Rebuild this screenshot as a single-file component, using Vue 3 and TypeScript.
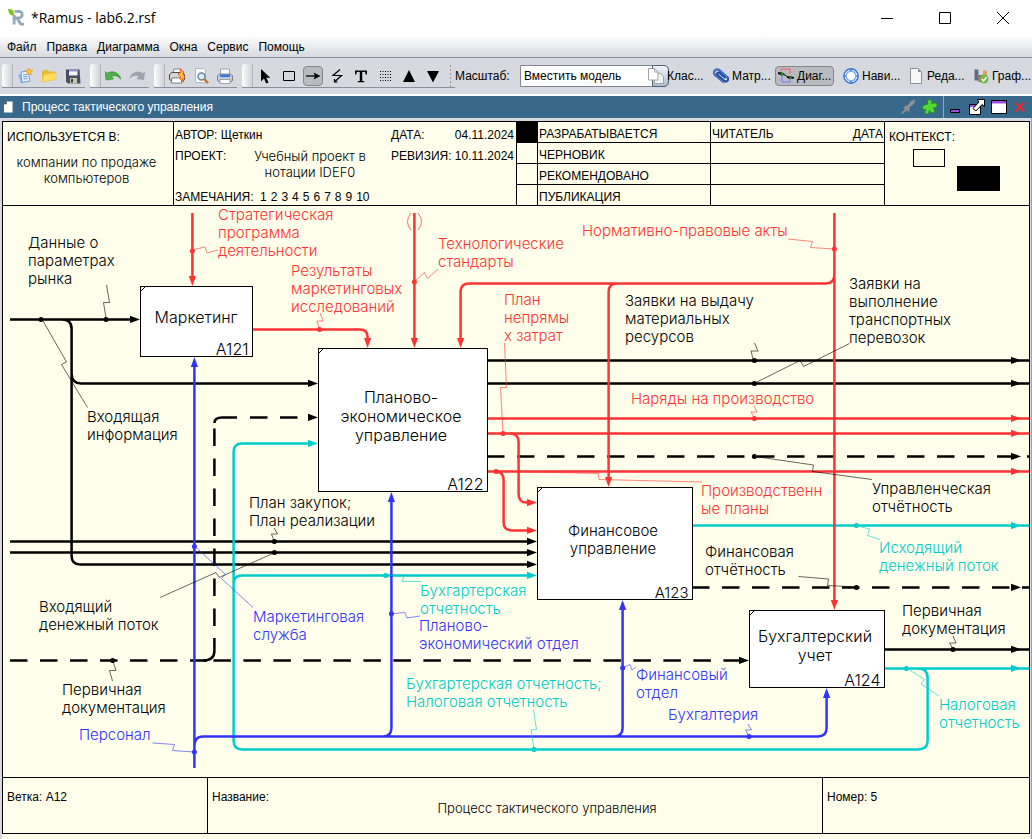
<script setup lang="ts">
import { ref } from 'vue'

type Tone = 'black' | 'red' | 'blue' | 'teal'
type Dir = 'right' | 'up' | 'down'
type Flow = { tone: Tone; d: string; dashed?: boolean }
type Head = { tone: Tone; x: number; y: number; dir: Dir }
type Dot = { tone: Tone; x: number; y: number }
type Leader = { tone: Tone; points: string }
type Label = { tone: Tone; x: number; y: number; lines: string[] }
type Box = { id: string; x: number; y: number; w: number; h: number; size: string; cx: number; ty: number; step: number; lines: string[] }

const zoomLevel = ref('fit')
const menus = ['Файл', 'Правка', 'Диаграмма', 'Окна', 'Сервис', 'Помощь']
const statuses = ['РАЗРАБАТЫВАЕТСЯ', 'ЧЕРНОВИК', 'РЕКОМЕНДОВАНО', 'ПУБЛИКАЦИЯ']

const flows: Flow[] = [
  { tone: 'black', d: 'M10 319.4H133M62 319.4Q71.6 319.4 71.6 329V556Q71.6 564.4 80 564.4H530M71.6 374Q72 383.4 81 383.4H311' },
  { tone: 'black', d: 'M10 541.4H530M10 552.6H530' },
  { tone: 'black', dashed: true, d: 'M10 660.4H207' },
  { tone: 'black', d: 'M203 660.4Q214.4 660.4 214.4 651V638M214.4 423Q214.4 417.4 222 417.4H237' },
  { tone: 'black', dashed: true, d: 'M214.4 626V428' },
  { tone: 'black', dashed: true, d: 'M250 417.4H311' },
  { tone: 'black', dashed: true, d: 'M213.4 660.4H742' },
  { tone: 'teal', d: 'M692 525.6H1029M884 668.4H1029M918 668.4Q927.6 668.4 927.6 678V741Q927.6 749.4 918 749.4H242Q233.6 749.4 233.6 741V452Q233.6 443.4 242 443.4H311M233.6 584Q233.6 575.4 242 575.4H530' },
  { tone: 'black', d: 'M487 360.4H1029M487 383.4H1029M884 649.4H1029' },
  { tone: 'red', d: 'M487 418.4H1029M487 433.4H1029M487 471.4H1029' },
  { tone: 'black', dashed: true, d: 'M487 456.4H1029' },
  { tone: 'black', dashed: true, d: 'M692 587.4H1029' },
  { tone: 'red', d: 'M192.4 213V280M252 329.4H360Q367.6 329.4 367.6 337V342M414.4 213V342' },
  { tone: 'red', d: 'M834.4 213V603M834.4 274Q834.4 283.4 826 283.4H469Q460.6 283.4 460.6 292V342M617 283.4Q608.6 283.4 608.6 292V480' },
  { tone: 'red', d: 'M510 433.4Q518.6 433.4 518.6 442V494Q518.6 502.6 527 502.6H530M495 471.4Q503.6 471.4 503.6 480V522Q503.6 530.4 512 530.4H530' },
  { tone: 'blue', d: 'M194.4 768V363M194.4 746Q194.4 736.4 203 736.4H818Q826.6 736.4 826.6 728V694M383 736.4Q391.4 736.4 391.4 728V498M614 736.4Q622.6 736.4 622.6 728V606' },
]

const heads: Head[] = [
  { tone: 'black', x: 140, y: 319.4, dir: 'right' },
  { tone: 'black', x: 318, y: 383.4, dir: 'right' },
  { tone: 'black', x: 318, y: 417.4, dir: 'right' },
  { tone: 'teal', x: 318, y: 443.4, dir: 'right' },
  { tone: 'red', x: 537, y: 502.6, dir: 'right' },
  { tone: 'red', x: 537, y: 530.4, dir: 'right' },
  { tone: 'black', x: 537, y: 541.4, dir: 'right' },
  { tone: 'black', x: 537, y: 552.6, dir: 'right' },
  { tone: 'black', x: 537, y: 564.4, dir: 'right' },
  { tone: 'teal', x: 537, y: 575.4, dir: 'right' },
  { tone: 'black', x: 749, y: 660.4, dir: 'right' },
  { tone: 'black', x: 1021, y: 360.4, dir: 'right' },
  { tone: 'black', x: 1021, y: 383.4, dir: 'right' },
  { tone: 'red', x: 1021, y: 418.4, dir: 'right' },
  { tone: 'red', x: 1021, y: 433.4, dir: 'right' },
  { tone: 'black', x: 1021, y: 456.4, dir: 'right' },
  { tone: 'red', x: 1021, y: 471.4, dir: 'right' },
  { tone: 'teal', x: 1021, y: 525.6, dir: 'right' },
  { tone: 'black', x: 1021, y: 587.4, dir: 'right' },
  { tone: 'black', x: 1021, y: 649.4, dir: 'right' },
  { tone: 'teal', x: 1021, y: 668.4, dir: 'right' },
  { tone: 'red', x: 192.4, y: 286, dir: 'down' },
  { tone: 'red', x: 367.6, y: 348, dir: 'down' },
  { tone: 'red', x: 414.4, y: 348, dir: 'down' },
  { tone: 'red', x: 460.6, y: 348, dir: 'down' },
  { tone: 'red', x: 608.6, y: 487, dir: 'down' },
  { tone: 'red', x: 834.4, y: 610, dir: 'down' },
  { tone: 'blue', x: 194.4, y: 357, dir: 'up' },
  { tone: 'blue', x: 391.4, y: 492, dir: 'up' },
  { tone: 'blue', x: 622.6, y: 600, dir: 'up' },
  { tone: 'blue', x: 826.6, y: 688, dir: 'up' },
]
const angles: Record<Dir, number> = { right: 0, down: 90, up: -90 }

const dots: Dot[] = [
  { tone: 'red', x: 192.4, y: 251 }, { tone: 'black', x: 41, y: 319.4 }, { tone: 'black', x: 106, y: 319.4 },
  { tone: 'red', x: 319.6, y: 329.4 }, { tone: 'red', x: 414.4, y: 282 }, { tone: 'red', x: 834.4, y: 249 },
  { tone: 'black', x: 754.4, y: 360.4 }, { tone: 'black', x: 754.4, y: 383.4 }, { tone: 'red', x: 754.4, y: 418.4 },
  { tone: 'red', x: 503, y: 433.4 }, { tone: 'black', x: 754.4, y: 456.4 }, { tone: 'red', x: 496, y: 471.4 },
  { tone: 'black', x: 274.4, y: 541.4 }, { tone: 'black', x: 274.4, y: 552.6 }, { tone: 'blue', x: 194.4, y: 546.4 },
  { tone: 'black', x: 112.6, y: 660.6 }, { tone: 'blue', x: 194.4, y: 752 }, { tone: 'teal', x: 385.6, y: 575.4 },
  { tone: 'blue', x: 391.4, y: 613.8 }, { tone: 'blue', x: 622.6, y: 668 }, { tone: 'teal', x: 534, y: 749.4 },
  { tone: 'teal', x: 856.4, y: 525.6 }, { tone: 'black', x: 856.4, y: 587.4 }, { tone: 'black', x: 953, y: 649.4 },
  { tone: 'teal', x: 906.4, y: 668.4 }, { tone: 'blue', x: 749, y: 736.4 },
]

const leaders: Leader[] = [
  { tone: 'red', points: '192,250 205,247 207,253 218,250' },
  { tone: 'black', points: '106,318 103.5,302.5 109.5,302.5 106.5,285' },
  { tone: 'black', points: '42.5,320 66.5,362 61.5,364.5 87.5,407.5' },
  { tone: 'red', points: '319.5,329 317,321 323,321 320,313' },
  { tone: 'red', points: '414,282 424.5,272.5 427.5,278.5 438,269' },
  { tone: 'red', points: '503,433 500.5,387.5 506.5,387.5 504.5,343' },
  { tone: 'red', points: '788,239 812.5,241.5 810.5,247.5 834,249' },
  { tone: 'black', points: '753,359 751,351 758,351 754.5,343' },
  { tone: 'black', points: '755,383 800,360.5 803.5,366.5 849.5,343.5' },
  { tone: 'red', points: '754,417 751,412 757,412 754,406' },
  { tone: 'black', points: '755,456.5 813.5,465 812.5,471.5 872,479.5' },
  { tone: 'red', points: '496,471 598.5,473.5 599,479.5 702,482' },
  { tone: 'black', points: '274,541 271.5,534 277.5,534 274,528' },
  { tone: 'black', points: '274,553 219,577.5 216,572.5 160,597.5' },
  { tone: 'blue', points: '194.5,546 225.5,574.5 221.5,578.5 253,607.5' },
  { tone: 'black', points: '112.5,660 116,670.5 109.5,670.5 112.5,681' },
  { tone: 'blue', points: '152.5,743 174.5,744.5 172.5,750.5 194,752' },
  { tone: 'teal', points: '386,575 404,576 402,581.5 421,581.5' },
  { tone: 'blue', points: '391,614 405,612.5 407,618 420,616' },
  { tone: 'blue', points: '622.5,668 630,664.5 632,670 636,667' },
  { tone: 'teal', points: '534,749 531,730 536.5,729.5 533.5,710' },
  { tone: 'teal', points: '856.5,525.5 869.5,529 867.5,535.5 880,539.5' },
  { tone: 'black', points: '798.5,576.5 828.5,579 827.5,585.5 856,587' },
  { tone: 'black', points: '953,649 949.5,643 956,643 953,636' },
  { tone: 'teal', points: '906.5,668 924.5,679.5 921,684 939,696' },
  { tone: 'blue', points: '749,736 745.5,730 751.5,730 748,724' },
]

const labels: Label[] = [
  { tone: 'black', x: 28, y: 248, lines: ['Данные о', 'параметрах', 'рынка'] },
  { tone: 'red', x: 218, y: 220, lines: ['Стратегическая', 'программа', 'деятельности'] },
  { tone: 'red', x: 291, y: 276, lines: ['Результаты', 'маркетинговых', 'исследований'] },
  { tone: 'red', x: 438, y: 249, lines: ['Технологические', 'стандарты'] },
  { tone: 'red', x: 582, y: 236, lines: ['Нормативно-правовые акты'] },
  { tone: 'red', x: 504, y: 305, lines: ['План', 'непрямы', 'х затрат'] },
  { tone: 'black', x: 625, y: 306, lines: ['Заявки на выдачу', 'материальных', 'ресурсов'] },
  { tone: 'black', x: 849, y: 289, lines: ['Заявки на', 'выполнение', 'транспортных', 'перевозок'] },
  { tone: 'red', x: 631, y: 404, lines: ['Наряды на производство'] },
  { tone: 'black', x: 87, y: 422, lines: ['Входящая', 'информация'] },
  { tone: 'black', x: 249, y: 508, lines: ['План закупок;', 'План реализации'] },
  { tone: 'black', x: 39, y: 612, lines: ['Входящий', 'денежный поток'] },
  { tone: 'black', x: 62, y: 695, lines: ['Первичная', 'документация'] },
  { tone: 'blue', x: 79, y: 740, lines: ['Персонал'] },
  { tone: 'blue', x: 253, y: 622, lines: ['Маркетинговая', 'служба'] },
  { tone: 'teal', x: 420, y: 596, lines: ['Бухгартерская', 'отчетность'] },
  { tone: 'blue', x: 419, y: 631, lines: ['Планово-', 'экономический отдел'] },
  { tone: 'teal', x: 406, y: 689, lines: ['Бухгартерская отчетность;', 'Налоговая отчетность'] },
  { tone: 'blue', x: 636, y: 680, lines: ['Финансовый', 'отдел'] },
  { tone: 'blue', x: 668, y: 720, lines: ['Бухгалтерия'] },
  { tone: 'red', x: 701, y: 496, lines: ['Производственн', 'ые планы'] },
  { tone: 'black', x: 872, y: 494, lines: ['Управленческая', 'отчётность'] },
  { tone: 'teal', x: 879, y: 553, lines: ['Исходящий', 'денежный поток'] },
  { tone: 'black', x: 705, y: 557, lines: ['Финансовая', 'отчётность'] },
  { tone: 'black', x: 902, y: 616, lines: ['Первичная', 'документация'] },
  { tone: 'teal', x: 939, y: 710, lines: ['Налоговая', 'отчетность'] },
]

const boxes: Box[] = [
  { id: 'A121', x: 140.5, y: 286.5, w: 112, h: 70, size: 'big', cx: 196, ty: 323, step: 19, lines: ['Маркетинг'] },
  { id: 'A122', x: 318.5, y: 348.5, w: 169, h: 143, size: 'big', cx: 401, ty: 403, step: 19, lines: ['Планово-', 'экономическое', 'управление'] },
  { id: 'A123', x: 537.5, y: 487.5, w: 155, h: 112, size: 'mid', cx: 613, ty: 536, step: 18, lines: ['Финансовое', 'управление'] },
  { id: 'A124', x: 749.5, y: 610.5, w: 135, h: 77, size: 'big', cx: 815, ty: 642, step: 19, lines: ['Бухгалтерский', 'учет'] },
]
</script>

<template>
  <div class="window">
    <header class="titlebar">
      <svg class="logo" viewBox="0 0 18 18" aria-hidden="true">
        <path d="M7 2.5h4.5a3.5 3.5 0 0 1 0 7H6.500M6.500 6v10.500M9.500 9.500l4 6.500H17" fill="none" stroke="#92a9ba" stroke-width="3" />
        <path d="M0 0c5 0 7 2 6 7-4 0-5-2-6-7z" fill="#7fc41c" />
      </svg>
      <h1>*Ramus - lab6.2.rsf</h1>
      <div class="window-controls">
        <button aria-label="Свернуть окно"><svg viewBox="0 0 14 14"><path d="M1 7.500h12" /></svg></button>
        <button aria-label="Развернуть окно"><svg viewBox="0 0 14 14"><path d="M1.500 1.500h11v11h-11z" /></svg></button>
        <button aria-label="Закрыть окно"><svg viewBox="0 0 14 14"><path d="M1 1l12 12M13 1L1 13" /></svg></button>
      </div>
    </header>

    <nav class="menubar" aria-label="Меню">
      <button v-for="m in menus" :key="m">{{ m }}</button>
    </nav>

    <div class="toolbar">
      <div class="group">
        <i class="grip"></i>
        <button aria-label="Новый">
          <svg viewBox="0 0 16 16"><path d="M1 7l8-3 3 9-8 2.500z" fill="#8db8ee" /><path d="M4 4l7-1 2 10-8 1.500z" fill="#e6f0fd" stroke="#6f9edb" /><path d="M6 7l4-.6M6.400 9l4-.6M6.800 11l4-.6" stroke="#6f9edb" /><path d="M12 0l1.200 2.200 2.600.3-1.900 1.800.5 2.500L12 5.600 9.700 6.800l.5-2.500L8.300 2.500l2.500-.3z" fill="#ffc42e" stroke="#ee8a1c" stroke-width=".6" /></svg>
        </button>
        <button aria-label="Открыть">
          <svg viewBox="0 0 16 16"><path d="M1 13.500V3l5-1.500L8 3.500h6v8z" fill="#e9b93a" /><path d="M1 14l2-7.500L15 4.500v7z" fill="#ffdc62" stroke="#efc13c" stroke-width=".6" /></svg>
        </button>
        <button aria-label="Сохранить">
          <svg viewBox="0 0 16 16"><path d="M1 1.500h13.500l1 14H3l-2-2z" fill="#4b4b63" /><path d="M4 2h8.500v5.500H4z" fill="#f3f3fb" /><path d="M4 2h8.500v1.500H4z" fill="#9c8fd8" /><path d="M5 10h7v5.500H5z" fill="#c9c9a8" /><path d="M6 11h2v3.500H6z" fill="#38384c" /></svg>
        </button>
      </div>

      <div class="group">
        <i class="grip"></i>
        <button aria-label="Отменить">
          <svg viewBox="0 0 16 16"><path d="M0 3.500l2.300 1.700C7 2.500 14 3.500 16 11.500c-2.500-3.500-6.500-4.500-9.500-3L8.500 11 1 12z" fill="#4fb04a" stroke="#2c8a35" stroke-width=".6" /></svg>
        </button>
        <button aria-label="Повторить">
          <svg viewBox="0 0 16 16"><path d="M16 3.500l-2.300 1.700C9 2.500 2 3.500 0 11.500c2.500-3.500 6.500-4.500 9.500-3L7.500 11l7.500 1z" fill="#a0a2a6" /></svg>
        </button>
      </div>

      <div class="group">
        <i class="grip"></i>
        <button aria-label="Быстрая печать">
          <svg viewBox="0 0 16 16"><path d="M4 5l1-4h7l1 4z" fill="#fff" stroke="#8b8b8b" /><path d="M.5 6.500L3 4.500h10l2.500 2v5L13 13H3L.5 11.500z" fill="#d5d5d5" stroke="#4a4a4a" /><path d="M3 10h9l1 5H2z" fill="#fff" stroke="#555" stroke-width=".7" /><path d="M11 1l4 3-1.500 2 2.500 3-2.500 1.500L15 14l-4.500-3.500L12 9 9 6l2.500-1.500z" fill="#ffd23d" stroke="#ee4a1c" stroke-width=".9" /></svg>
        </button>
        <button aria-label="Предварительный просмотр">
          <svg viewBox="0 0 16 16"><path d="M2.500.5h8l2 2v12h-10z" fill="#fff" stroke="#a9bccb" /><circle cx="8.500" cy="8.500" r="3.500" fill="#d7ecf8" stroke="#6c8494" stroke-width="1.400" /><path d="M11 11l4 4" stroke="#c2722d" stroke-width="2.400" /></svg>
        </button>
        <button aria-label="Печать">
          <svg viewBox="0 0 16 16"><path d="M3.500 7V1h9v6z" fill="#fff" stroke="#9aa4b0" /><path d="M.5 7.500L2.500 6h11l2 1.500v5l-2 1.500h-11l-2-1.500z" fill="#c5cad2" stroke="#646c78" stroke-width=".8" /><path d="M3 6.500h10v2.500H3z" fill="#3778d8" /><path d="M3 11.500h10v4H3z" fill="#fff" stroke="#7d8794" stroke-width=".7" /></svg>
        </button>
      </div>

      <div class="group">
        <i class="grip"></i>
        <button aria-label="Курсор"><svg viewBox="0 0 16 16"><path d="M4 1v12.500l3-3 2.200 5 2.300-1-2.200-4.800h4z" fill="#000" /></svg></button>
        <button aria-label="Функциональный блок"><svg viewBox="0 0 16 16"><path d="M2.500 3.500h11v9h-11z" fill="none" stroke="#000" /></svg></button>
        <button class="pressed" aria-label="Стрелка"><svg viewBox="0 0 16 16"><path d="M1 8h10" stroke="#000" stroke-width="1.300" /><path d="M8.500 4.500L15.500 8l-7 3.500 1.500-3.500z" fill="#000" /></svg></button>
        <button aria-label="Тильда"><svg viewBox="0 0 16 16"><path d="M11 1.500L4 7.500h8.500L6 13.500M5.500 11v3h3" fill="none" stroke="#000" stroke-width="1.200" /></svg></button>
        <button aria-label="Текст"><svg viewBox="0 0 16 16"><path d="M2 2.500h12v4h-1.200L12 4H9.200v9h2v1.200H4.800V13h2V4H4l-.8 2.500H2z" fill="#000" /></svg></button>
        <button aria-label="Сетка"><svg viewBox="0 0 16 16"><path d="M3 3.500h11M3 6.500h11M3 9.500h11M3 12.500h11" stroke="#000" stroke-width="1" stroke-dasharray="1 1.500" /></svg></button>
        <button aria-label="Вверх"><svg viewBox="0 0 16 16"><path d="M8 2l6 12H2z" fill="#000" /></svg></button>
        <button aria-label="Вниз"><svg viewBox="0 0 16 16"><path d="M8 14.500L2 3h12z" fill="#000" /></svg></button>
        <i class="sep"></i>
      </div>

      <label class="scale-label" for="scale">Масштаб:</label>
      <div class="combo">
        <select id="scale" v-model="zoomLevel"><option value="fit">Вместить модель</option></select>
        <i class="combo-arrow"></i>
      </div>

      <div class="views">
        <button>
          <svg viewBox="0 0 16 16"><path d="M6.500 5.500h6l3 3v7h-9z" fill="#f4f4f4" stroke="#a2a2a2" /><path d="M.5.500h6l3.500 3.500v8H.5z" fill="#fff" stroke="#a2a2a2" /><path d="M6.500.500V4H10" fill="none" stroke="#a2a2a2" /></svg><span>Клас...</span>
        </button>
        <button>
          <svg viewBox="0 0 16 16"><path d="M11 14.500L2 7C-.5 4 2.500 0 6 2l8.500 7.500c2 2.500-1 5-3 3.500L4.500 7c-1-1.500.5-3 2-2l6 5" fill="none" stroke="#2450a8" stroke-width="2.200" /><path d="M11 14.500L2 7C-.5 4 2.500 0 6 2l8.500 7.500" fill="none" stroke="#7fa8ea" stroke-width=".7" /></svg><span>Матр...</span>
        </button>
        <button class="pressed">
          <svg viewBox="0 0 16 16"><path d="M3 3V1h9v5" fill="none" stroke="#f55" /><path d="M4 7v7h8v-3" fill="none" stroke="#77f" /><path d="M0 4l4 .5L7 6 4 7.500 0 6zM9 8.500l3-.5 4 1v1.500l-4 .5-3-1z" fill="#111" /><circle cx="4" cy="6" r="1.500" fill="#1e8a28" /><circle cx="12.500" cy="9.500" r="1.500" fill="#1e8a28" /><path d="M6 6.500l4 2.500" stroke="#111" /></svg><span>Диаг...</span>
        </button>
        <button>
          <svg viewBox="0 0 16 16"><circle cx="8" cy="8" r="7.200" fill="#dbeeff" stroke="#3b74cf" stroke-width="1.400" /><path d="M8 3l3.500 1.500L13 8l-1.500 3.500L8 13l-3.500-1.500L3 8l1.500-3.500z" fill="#fff" stroke="#6fa8f0" stroke-width="1.200" /><path d="M8 1v2M8 13v2M1 8h2M13 8h2" stroke="#2a5cb8" stroke-width="1.200" /></svg><span>Нави...</span>
        </button>
        <button>
          <svg viewBox="0 0 16 16"><path d="M2.500.500h7.500l3.500 3.500v11.500h-11z" fill="#f6f6f6" stroke="#8f8f8f" /><path d="M10 .5V4h3.500z" fill="#888" /></svg><span>Реда...</span>
        </button>
        <button>
          <svg viewBox="0 0 16 16"><path d="M1.500 1.500h4v11h-4z" fill="#5c7187" /><path d="M5.500 7h4v7h-4z" fill="#cb4a3a" /><path d="M10 2.500h4v8h-4z" fill="#dfa05c" /><circle cx="11" cy="11" r="4.500" fill="#6fbb4e" /><path d="M8.800 11l1.700 1.900 3-3.700" fill="none" stroke="#fff" stroke-width="1.500" /></svg><span>Граф...</span>
        </button>
      </div>
    </div>

    <div class="panel-head">
      <svg class="page" viewBox="0 0 10 12" aria-hidden="true"><path d="M3 0h6.500v12H0V3z" fill="#fffdf4" /><path d="M0 3h3V0z" fill="#333" /></svg>
      <h2>Процесс тактического управления</h2>
      <button class="tool" aria-label="Закрепить"><svg viewBox="0 0 16 16"><path d="M1 15l1-2 3-3-2-1.500L8 6l3-4 4.500-1.500L14 5l-4 3-1 5.500L7 11l-3 3z" fill="#8d8f92" /></svg></button>
      <button class="tool" aria-label="Добавить"><svg viewBox="0 0 16 16"><path d="M6 5C4.500 1.500 6 .5 8 .8s2.500 1.700 1.500 4c3-1.500 5-1 5.500.7s-1 3.500-4 3.500c2 2 2 3.500.7 4.500-1.700 1-3.200 0-4.200-2C7 14.500 5.500 15.500 4 15s-1.500-2.500 0-4.500C1.500 11 .5 10 .5 8.500.5 6.500 3 5.500 6 5z" fill="#55d834" stroke="#188d18" stroke-width=".8" /></svg></button>
      <i class="bar"></i>
      <button class="tool" aria-label="Свернуть"><svg viewBox="0 0 16 16"><path d="M3.500 10.500h9v3h-9z" fill="#a44ae8" stroke="#000" /></svg></button>
      <button class="tool" aria-label="Открепить"><svg viewBox="0 0 16 16"><path d="M.5 5.500h11v10H.5z" fill="#fff" stroke="#000" /><path d="M1 6h10v2H1z" fill="#a44ae8" /><path d="M8.500.500h7v7L13 5.500l-6 6.500-3-2.500L10 3z" fill="#fff" stroke="#000" /></svg></button>
      <button class="tool" aria-label="Развернуть"><svg viewBox="0 0 16 16"><path d="M.5 1.500h15v13H.5z" fill="#fff" stroke="#000" /><path d="M1 2h14v2.500H1z" fill="#a44ae8" /></svg></button>
      <button class="tool last" aria-label="Закрыть"><svg viewBox="0 0 16 16"><path d="M4 4l8 8.500M12 3.500l-8 9" stroke="#f0272d" stroke-width="2" /></svg></button>
    </div>

    <main class="canvas">
      <section class="sheet">
        <div class="sheet-head">
          <div class="used">
            <p>ИСПОЛЬЗУЕТСЯ В:</p>
            <p class="spaced">компании по продаже<br>компьютеров</p>
          </div>
          <div class="meta">
            <p><span>АВТОР: Щеткин</span></p>
            <p><span>ДАТА:</span><span>04.11.2024</span></p>
            <p>ПРОЕКТ:</p>
            <p class="spaced project">Учебный проект в<br>нотации IDEF0</p>
            <p><span>РЕВИЗИЯ:</span><span>10.11.2024</span></p>
            <p class="notes"><span class="notes-title">ЗАМЕЧАНИЯ:</span><span v-for="n in 10" :key="n">{{ n }}</span></p>
          </div>
          <table class="status">
            <colgroup><col class="c-mark"><col class="c-name"><col class="c-reader"></colgroup>
            <tbody>
              <tr v-for="(s, i) in statuses" :key="s">
                <td :class="{ on: i === 0 }"></td>
                <th scope="row">{{ s }}</th>
                <td><div v-if="i === 0" class="reader"><span>ЧИТАТЕЛЬ</span><span>ДАТА</span></div></td>
              </tr>
            </tbody>
          </table>
          <div class="context">
            <p>КОНТЕКСТ:</p>
            <svg viewBox="0 0 88 44" aria-hidden="true"><rect x=".5" y=".5" width="31" height="17" fill="none" stroke="#000" /><rect x="44" y="17" width="43" height="25" /></svg>
          </div>
        </div>

        <svg class="diagram" viewBox="3 206 1026 571" role="img" aria-label="Процесс тактического управления">
          <path v-for="(f, i) in flows" :key="'f' + i" :class="['flow', f.tone, { dashed: f.dashed }]" :d="f.d" />
          <path class="paren" d="M411 213Q404 222 411 230M418 213Q425 222 418 230" />
          <polyline v-for="(l, i) in leaders" :key="'l' + i" :class="['leader', l.tone]" :points="l.points" />
          <circle v-for="(p, i) in dots" :key="'p' + i" :class="['solid', p.tone]" :cx="p.x" :cy="p.y" r="2.500" />
          <g v-for="b in boxes" :key="b.id">
            <rect class="box" :x="b.x" :y="b.y" :width="b.w" :height="b.h" />
            <path class="tick" :d="`M${b.x} ${b.y + 5}L${b.x + 5} ${b.y}`" />
            <text :class="b.size" text-anchor="middle"><tspan v-for="(t, i) in b.lines" :key="t" :x="b.cx" :y="b.ty + i * b.step">{{ t }}</tspan></text>
            <text :class="['code', b.size]" text-anchor="end" :x="b.x + b.w - 4" :y="b.y + b.h - 2">{{ b.id }}</text>
          </g>
          <path v-for="(h, i) in heads" :key="'h' + i" :class="['solid', h.tone]" d="M0 0L-10 -3.600V3.600z" :transform="`translate(${h.x} ${h.y}) rotate(${angles[h.dir]})`" />
          <text v-for="(l, i) in labels" :key="'t' + i" :class="['label', l.tone]"><tspan v-for="(t, n) in l.lines" :key="n" :x="l.x" :y="l.y + n * 18">{{ t }}</tspan></text>
        </svg>

        <footer class="sheet-foot">
          <p>Ветка: A12</p>
          <div><p>Название:</p><p class="spaced">Процесс тактического управления</p></div>
          <p>Номер: 5</p>
        </footer>
      </section>
    </main>
  </div>
</template>

<style>
body { margin: 0; background: #ffffeb; }
</style>

<style scoped>
* { box-sizing: border-box; }
p, h1, h2 { margin: 0; font-weight: 400; }
button { border: 0; padding: 0; background: none; color: inherit; font: inherit; }
svg { display: block; }

.window { min-height: 100vh; display: flex; flex-direction: column; overflow: hidden; background: #d6d9df; color: #000; font: 12px/16px "Liberation Sans", Arial, sans-serif; }

.titlebar { display: flex; align-items: center; height: 35px; padding-left: 8px; background: #fff; }
.logo { width: 17px; height: 17px; margin-right: 6px; }
.titlebar h1 { flex: 1; font: 14px/20px "Open Sans", sans-serif; }
.window-controls { display: flex; }
.window-controls button { width: 58px; height: 32px; display: grid; place-items: center; }
.window-controls svg { width: 14px; height: 14px; fill: none; stroke: #000; stroke-width: 1; }

.menubar { display: flex; gap: 10px; height: 23px; padding: 1px 0 0 7px; background: linear-gradient(#fff, #d6d9df); border-bottom: 1px solid #8e8f9c; }

.toolbar { display: flex; align-items: center; height: 36px; padding-left: 2px; overflow: hidden; white-space: nowrap; }
.group { display: flex; align-items: center; height: 24px; margin-right: 5px; border-bottom: 1px solid #8e8f9c; flex: none; }
.group button { width: 24px; height: 22px; display: grid; place-items: center; }
.group svg { width: 16px; height: 16px; }
.group .pressed { width: 20px; height: 20px; margin: 0 2px; border: 1px solid #85878d; border-radius: 4px; background: #b9bbc1; }
.grip { width: 11px; height: 23px; border-right: 1px solid #b4b7be; border-radius: 3px 0 0 3px; background: linear-gradient(90deg, #fff, #cfd2d8); }
.sep { width: 10px; height: 22px; background: linear-gradient(#999 50%, transparent 50%) 5px 0 / 1px 4px repeat-y; }
.group:nth-of-type(4) { margin-right: 0; }
.scale-label { width: 65px; flex: none; }
.combo { position: relative; width: 149px; height: 22px; flex: none; }
.combo select { appearance: none; width: 100%; height: 100%; padding: 0 3px; border: 1px solid #83868e; border-radius: 0 5px 5px 0; background: #fff; color: #000; font: inherit; }
.combo-arrow { position: absolute; top: 0; right: 0; width: 17px; height: 22px; border: 1px solid #4d6378; border-radius: 0 5px 5px 0; background: linear-gradient(#f2f5f8, #a9bfd2); pointer-events: none; }
.views { position: relative; display: flex; flex: none; margin-left: -24px; }
.views button { display: flex; align-items: center; gap: 3px; width: 59px; height: 20px; margin-right: 6px; padding-left: 3px; }
.views svg { width: 16px; height: 16px; flex: none; }
.views .pressed { padding-left: 2px; border: 1px solid #85878d; border-radius: 4px; background: #b9bbc1; }

.panel-head { display: flex; align-items: center; height: 24px; padding: 0 2px 0 4px; background: #39698a; border-top: 2px solid #fff; color: #fff; }
.page { width: 9px; height: 12px; margin-right: 9px; }
.panel-head h2 { flex: 1; font: inherit; }
.tool { width: 22px; height: 20px; display: grid; place-items: center; }
.tool svg { width: 16px; height: 16px; }
.bar { width: 1px; height: 22px; margin: 0 0 0 2px; background: #8fa9bb; }
.last { width: 20px; }

.canvas { flex: 1; display: flex; padding: 3px 2px 0; background: linear-gradient(#9a9db0, #9a9db0) right / 1px 100% no-repeat, #d6d9df; }
.sheet { flex: 1; min-width: 0; background: #ffffeb; }
.spaced { font: 300 13px/16px Inter, "Liberation Sans", sans-serif; }

.sheet-head { display: grid; grid-template-columns: 170fr 343fr 368fr 145fr; border: 1px solid #000; }
.sheet-head > * { min-width: 0; }
.used { padding: 7px 4px 0; }
.used .spaced { padding-top: 9px; text-align: center; margin-right: 3px; }
.meta { display: grid; grid-template: 21px 21px 21px 20px / 54px 1fr 123px; border-left: 1px solid #000; padding: 0 2px 0 1px; }
.meta p { display: flex; align-items: flex-end; justify-content: space-between; }
.meta p:first-child { grid-column: span 2; }
.meta .project { display: block; padding-top: 5px; text-align: center; grid-row: 2 / span 2; grid-column: 2; }
.meta .notes { grid-row: 4; grid-column: 1 / -1; justify-content: flex-start; gap: 4px; }
.notes-title { width: 81px; }
.status { width: 100%; border-spacing: 0; table-layout: fixed; border-left: 1px solid #000; }
.c-mark { width: 20px; }
.c-name { width: 173px; }
.status th, .status td { height: 21px; padding: 4px 1px 0; border-bottom: 1px solid #000; text-align: left; font-weight: 400; line-height: 16px; }
.status tr > * + * { border-left: 1px solid #000; }
.status tr:last-child > * { height: 20px; border-bottom: 0; }
.status .on { background: #000; }
.reader { display: flex; justify-content: space-between; }
.context { padding: 7px 4px 0; border-left: 1px solid #000; }
.context svg { width: 88px; height: 44px; margin: 4px 0 0 24px; }

.diagram { width: 100%; height: auto; border: solid #000; border-width: 0 1px; }
.flow { fill: none; stroke-width: 2.5; }
.dashed { stroke-dasharray: 17.5 12.5; }
.leader { fill: none; stroke-width: 1; opacity: .6; }
.paren { fill: none; stroke: #f33; stroke-width: 1; opacity: .7; }
.box { fill: #fff; stroke: #000; stroke-width: 1; }
.tick { stroke: #000; stroke-width: 1; }
.flow.black, .leader.black { stroke: #000; }
.flow.red, .leader.red { stroke: #f33; }
.flow.blue, .leader.blue { stroke: #33f; }
.flow.teal, .leader.teal { stroke: #0cc; }
.solid.black, .label.black { fill: #000; }
.solid.red, .label.red { fill: #f33; }
.solid.blue, .label.blue { fill: #33f; }
.solid.teal, .label.teal { fill: #0cc; }
.diagram text { font-family: Inter, "Liberation Sans", sans-serif; font-weight: 300; font-size: 15px; }
.diagram .big { font-size: 16px; }

.sheet-foot { display: grid; grid-template-columns: 204fr 615fr 207fr; border: 1px solid #000; height: 57px; }
.sheet-foot > * { padding: 11px 4px 0; }
.sheet-foot > * + * { border-left: 1px solid #000; }
.sheet-foot .spaced { text-align: center; margin: -5px 0 0 64px; }
</style>
